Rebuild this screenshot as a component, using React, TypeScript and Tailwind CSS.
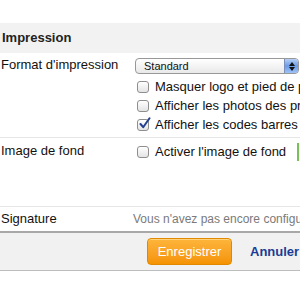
import React from 'react';

const Box: React.FC<{ checked?: boolean }> = ({ checked }) => (
  <span className="relative inline-block w-[12px] h-[12px] shrink-0 rounded-[3px] border border-[#8e8e8e] bg-gradient-to-b from-white to-[#e4e4e4] shadow-[inset_0_1px_0_#fff]">
    {checked && (
      <svg className="absolute left-[0px] top-[-3px] w-[13px] h-[13px]" viewBox="0 0 13 13">
        <path d="M2.5 7 L5.2 10.2 L11.5 1.2" fill="none" stroke="#23408f" strokeWidth={2} strokeLinecap="round" strokeLinejoin="round" />
      </svg>
    )}
  </span>
);

const CheckLine: React.FC<{ label: string; checked?: boolean; children?: React.ReactNode }> = ({ label, checked, children }) => (
  <div className="flex items-center h-[19px] pl-[2px] whitespace-nowrap">
    <Box checked={checked} />
    <span className="ml-[6px] text-[13px] text-[#111]">{label}</span>
    {children}
  </div>
);

export default function App() {
  return (
    <div className="w-[300px] h-[300px] overflow-hidden bg-white font-['Liberation_Sans',Arial,sans-serif]">
      <div className="w-[480px]">
        <div className="h-[23px]" />
        <div className="h-[30px] bg-[#f2f2f2] flex items-center pl-[2px] text-[13px] font-bold text-[#222]">Impression</div>

        <div className="flex border-b border-[#e6e6e6] h-[85px]">
          <div className="w-[135px] shrink-0 pl-[1px] pt-[4px] text-[13px] leading-[16px] text-[#111]">Format d'impression</div>
          <div className="pt-[5px]">
            <div className="flex items-center w-[164px] h-[16px] rounded-[4px] border border-[#989898] bg-gradient-to-b from-white to-[#e9e9e9] overflow-hidden">
              <span className="flex-1 pl-[8px] text-[11px] leading-[14px] text-[#111]">Standard</span>
              <span className="w-[14px] h-full border-l border-[#7d8fb8] bg-gradient-to-b from-[#b7d0f5] via-[#6a9be8] to-[#9ec3f5] flex flex-col items-center justify-center gap-[1px]">
                <svg width="6" height="4" viewBox="0 0 6 4"><path d="M0 4 L3 0 L6 4 Z" fill="#111" /></svg>
                <svg width="6" height="4" viewBox="0 0 6 4"><path d="M0 0 L3 4 L6 0 Z" fill="#111" /></svg>
              </span>
            </div>
            <div className="mt-[3px]">
              <CheckLine label="Masquer logo et pied de page" />
              <CheckLine label="Afficher les photos des produits" />
              <CheckLine label="Afficher les codes barres" checked />
            </div>
          </div>
        </div>

        <div className="flex border-b border-[#e6e6e6] h-[69px]">
          <div className="w-[135px] shrink-0 pl-[1px] pt-[5px] text-[13px] leading-[16px] text-[#111]">Image de fond</div>
          <div className="pt-[4px]">
            <CheckLine label="Activer l'image de fond">
              <span className="ml-[11px] w-[20px] h-[18px] border-l-2 border-[#7cbf5a] bg-[#f6f6f6]" />
            </CheckLine>
          </div>
        </div>

        <div className="flex items-center h-[24px] border-b-2 border-[#a8a8a8] box-content">
          <div className="w-[133px] shrink-0 pl-[1px] text-[13px] text-[#111]">Signature</div>
          <div className="text-[12px] text-[#7a7a7a] whitespace-nowrap">Vous n'avez pas encore configuré de signature</div>
        </div>

        <div className="h-[38px] bg-[#f1f1f1] border-b border-[#bdbdbd] flex items-center pl-[147px]">
          <button className="h-[27px] w-[85px] rounded-[4px] border border-[#e08900] bg-gradient-to-b from-[#fdb53a] to-[#f59300] text-white text-[13px] shadow-[inset_0_1px_0_#ffd27a]">
            Enregistrer
          </button>
          <span className="ml-[18px] text-[13px] font-bold text-[#1b3c94]">Annuler</span>
        </div>
      </div>
    </div>
  );
}
